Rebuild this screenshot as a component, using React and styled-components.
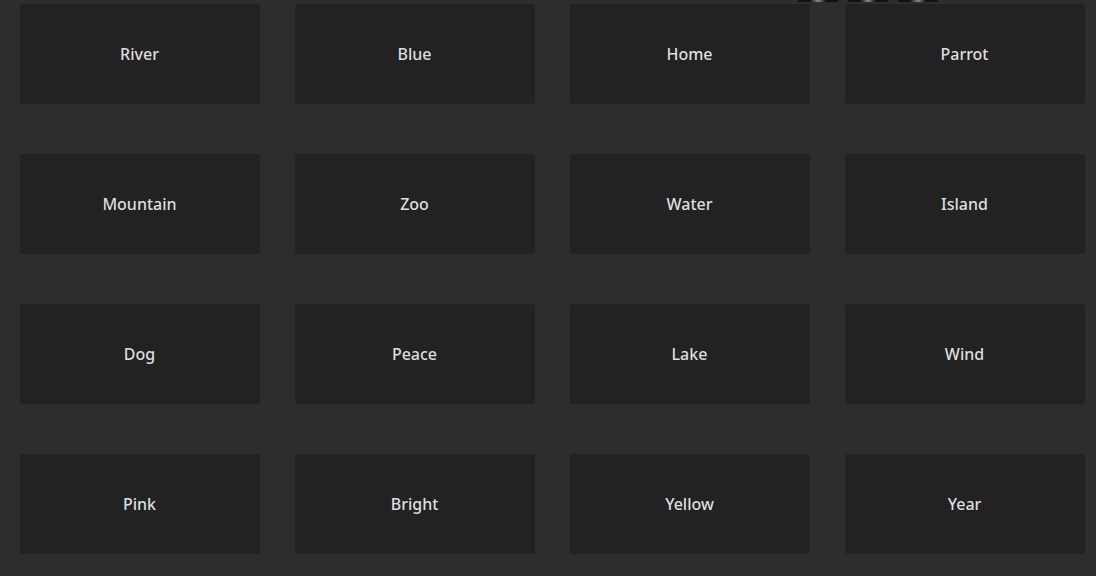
import React from "react";
import styled, { createGlobalStyle } from "styled-components";

const GlobalStyle = createGlobalStyle`
  html, body {
    margin: 0;
    padding: 0;
    background: #2d2d2d;
    font-family: "Noto Sans", "Open Sans", sans-serif;
    overflow: hidden;
  }
`;

const Page = styled.div`
  position: relative;
  height: 576px;
  padding: 4px 20px 0;
  box-sizing: border-box;
  background: #2d2d2d;
`;

const Grid = styled.div`
  display: grid;
  grid-template-columns: repeat(4, 240px);
  column-gap: 35px;
  row-gap: 50px;
`;

const Card = styled.div`
  height: 100px;
  display: flex;
  align-items: center;
  justify-content: center;
  padding-right: 1px;
  background: #222222;
  border-radius: 3px;
  color: #dedede;
  font-size: 16px;
  font-weight: 500;
  cursor: pointer;
`;

const TopStrip = styled.div`
  position: absolute;
  top: 0;
  left: 798px;
  display: flex;
  gap: 10px;
`;

const Tab = styled.div`
  width: 40px;
  height: 2px;
  background: linear-gradient(90deg, #111 0%, #111 30%, #8a8a8a 50%, #111 70%, #111 100%);
`;

const words = [
  "River", "Blue", "Home", "Parrot",
  "Mountain", "Zoo", "Water", "Island",
  "Dog", "Peace", "Lake", "Wind",
  "Pink", "Bright", "Yellow", "Year",
];

const App = () => {
  return (
    <>
      <GlobalStyle />
      <Page>
        <TopStrip>
          <Tab />
          <Tab />
          <Tab />
        </TopStrip>
        <Grid>
          {words.map((word) => (
            <Card key={word}>{word}</Card>
          ))}
        </Grid>
      </Page>
    </>
  );
};

export default App;
